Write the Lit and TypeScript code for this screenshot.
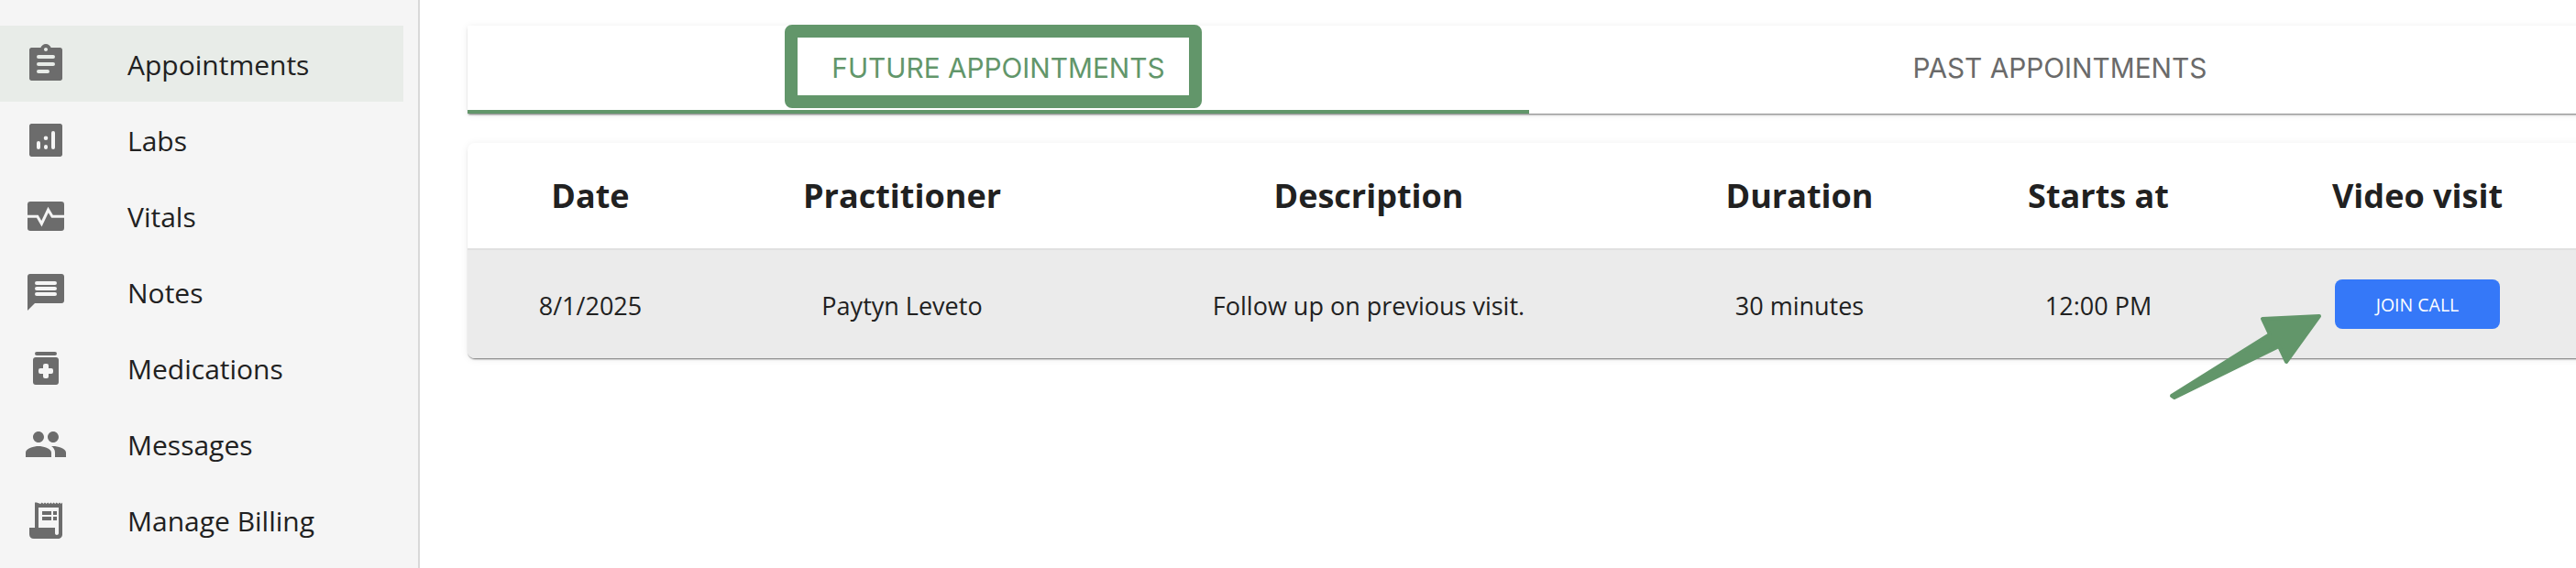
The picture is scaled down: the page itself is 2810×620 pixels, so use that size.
import { LitElement, html, css, svg } from "lit";
import { customElement } from "lit/decorators.js";

const bar = (x: number, y: number, w: number) => `M${x + 1} ${y}h${w - 2}a1 1 0 0 1 0 2H${x + 1}a1 1 0 0 1 0-2z`;

const nav = [
  { label: "Appointments", active: true, icon: svg`<path fill-rule="evenodd" d="M19 3h-4.18C14.4 1.84 13.3 1 12 1s-2.4.84-2.82 2H4.2C3.5 3 3 3.5 3 4.2v15.6c0 .7.5 1.2 1.2 1.2h15.6c.7 0 1.2-.5 1.2-1.2V4.2C21 3.5 20.5 3 19.8 3H19zM12 3c.55 0 1 .45 1 1s-.45 1-1 1-1-.45-1-1 .45-1 1-1z ${bar(7, 7, 10)} ${bar(7, 11, 10)} ${bar(7, 15, 7)}"/>` },
  { label: "Labs", icon: svg`<path fill-rule="evenodd" d="M4.2 3h15.6c.7 0 1.2.5 1.2 1.2v15.6c0 .7-.5 1.2-1.2 1.2H4.2C3.5 21 3 20.5 3 19.8V4.2C3 3.5 3.5 3 4.2 3z M8 12.5a1 1 0 0 1 1 1V16a1 1 0 0 1-2 0v-2.5a1 1 0 0 1 1-1z M12 9.7a1.15 1.15 0 1 1 0 2.3 1.15 1.15 0 0 1 0-2.3z M12 14.5a1 1 0 0 1 1 1v.5a1 1 0 0 1-2 0v-.5a1 1 0 0 1 1-1z M16 7a1 1 0 0 1 1 1v8a1 1 0 0 1-2 0V8a1 1 0 0 1 1-1z"/>` },
  { label: "Vitals", icon: svg`<rect x="2" y="4" width="20" height="16" rx="1.6"/><path d="M2 12.1h5.4l2.3 4 3.6-7.6 2.2 3.6H22" fill="none" stroke="#f5f5f5" stroke-width="1.5"/>` },
  { label: "Notes", icon: svg`<path fill-rule="evenodd" d="M20.6 2H3.4C2.6 2 2 2.6 2 3.4V22l4-4h14.6c.8 0 1.4-.6 1.4-1.4V3.4c0-.8-.6-1.4-1.4-1.4z ${bar(6, 6, 12)} ${bar(6, 9, 12)} ${bar(6, 12, 12)}"/>` },
  { label: "Medications", icon: svg`<path fill-rule="evenodd" d="M7 3h10a1 1 0 0 1 0 2H7a1 1 0 0 1 0-2zM17.6 6H6.4C5.6 6 5 6.6 5 7.4v12.2c0 .8.6 1.4 1.4 1.4h11.2c.8 0 1.4-.6 1.4-1.4V7.4C19 6.6 18.4 6 17.6 6zM15 15h-1.5v1.5a1 1 0 0 1-1 1h-1a1 1 0 0 1-1-1V15H9a1 1 0 0 1-1-1v-1a1 1 0 0 1 1-1h1.5v-1.5a1 1 0 0 1 1-1h1a1 1 0 0 1 1 1V12H15a1 1 0 0 1 1 1v1a1 1 0 0 1-1 1z"/>` },
  { label: "Messages", icon: svg`<path d="M16 11c1.66 0 2.99-1.34 2.99-3S17.66 5 16 5c-1.66 0-3 1.34-3 3s1.34 3 3 3zm-8 0c1.66 0 2.99-1.34 2.99-3S9.66 5 8 5C6.34 5 5 6.34 5 8s1.34 3 3 3zm0 2c-2.33 0-7 1.17-7 3.5V19h14v-2.5c0-2.33-4.67-3.5-7-3.5zm8 0c-.29 0-.62.02-.97.05 1.16.84 1.97 1.97 1.97 3.45V19h6v-2.5c0-2.33-4.67-3.5-7-3.5z"/>` },
  { label: "Manage Billing", icon: svg`<path fill-rule="evenodd" d="M21 2.2 20.3 3l-.8-.8-.8.8-.8-.8-.8.8-.8-.8-.8.8-.8-.8-.8.8-.8-.8-.8.8-.8-.8-.8.8-.8-.8-.8.8L7 2.2h-1V16H3v3.6C3 21 4 22 5.4 22h13.2c1.4 0 2.4-1 2.4-2.4V2.2zM19 19c0 .55-.45 1-1 1s-1-.45-1-1v-3H8V5h11v14zM10 7h5v2h-5zm6 0h2v2h-2zm-6 3h5v2h-5zm6 0h2v2h-2z"/>` },
];

const columns = [
  { head: "Date", cell: "8/1/2025" },
  { head: "Practitioner", cell: "Paytyn Leveto" },
  { head: "Description", cell: "Follow up on previous visit." },
  { head: "Duration", cell: "30 minutes" },
  { head: "Starts at", cell: "12:00 PM" },
];

@customElement("app-root")
export class AppRoot extends LitElement {
  static styles = css`
    :host {
      display: block;
      position: relative;
      width: 2810px;
      height: 620px;
      overflow: hidden;
      background: #fff;
      font-family: "Open Sans", "Liberation Sans", sans-serif;
      color: #212121;
    }
    .page {
      display: grid;
      grid-template-columns: 458px 1fr;
      height: 620px;
    }
    .side {
      background: #f5f5f5;
      border-right: 2px solid #d9d9d9;
      padding: 28px 16px 0 0;
      box-sizing: border-box;
    }
    .item {
      height: 83px;
      display: flex;
      align-items: center;
      gap: 65px;
      padding-left: 26px;
      font-size: 30px;
    }
    .item span { padding-top: 1px; }
    .item.active { background: #e8ece8; }
    .item svg { width: 48px; height: 48px; fill: #6c6c6c; flex: none; }
    .main {
      position: relative;
      padding: 28px 0 0 52px;
      min-width: 0;
    }
    .tabs {
      display: flex;
      width: 2316px;
      height: 96px;
      box-sizing: border-box;
      background: #fff;
      box-shadow: 0 2px 2px -1px rgba(0,0,0,.55), 0 1px 8px rgba(0,0,0,.08);
    }
    .tab {
      flex: 1;
      display: flex;
      align-items: center;
      justify-content: center;
      height: 92px;
      border-bottom: 4px solid transparent;
      font-family: "Inter", sans-serif;
      font-weight: 400;
      font-size: 29.8px;
      color: #6a6a6a;
    }
    .tab.on { color: #62966a; border-bottom-color: #62966a; }
    .card {
      width: 2316px;
      margin-top: 32px;
      background: #fff;
      border-radius: 8px;
      overflow: hidden;
      box-shadow: 0 2px 2px -1px rgba(0,0,0,.55), 0 1px 8px rgba(0,0,0,.08);
    }
    .grid {
      display: grid;
      grid-template-columns: 268px 412px 606px 334px 318px 378px;
      justify-items: center;
      align-items: center;
    }
    .head {
      height: 115px;
      font-weight: 700;
      font-size: 36px;
      color: #212121;
    }
    .row {
      height: 120px;
      background: #ebebeb;
      border-top: 2px solid #e0e0e0;
      box-sizing: border-box;
      font-size: 27px;
    }
    .row > div { padding-top: 2px; }
    .btn {
      width: 180px;
      height: 54px;
      border: 0;
      border-radius: 8px;
      background: #3578f8;
      color: #fff;
      font-family: inherit;
      font-size: 19.5px;
      padding: 0;
    }
    .mark {
      position: absolute;
      left: 398px;
      top: 27px;
      width: 455px;
      height: 91px;
      box-sizing: border-box;
      border: 14px solid #62966a;
      border-radius: 8px;
      pointer-events: none;
    }
    .arrow {
      position: absolute;
      left: 1900px;
      top: 335px;
      width: 180px;
      height: 110px;
      overflow: visible;
      fill: #62966a;
      stroke: #62966a;
      stroke-width: 4px;
      stroke-linejoin: round;
    }
  `;

  render() {
    return html`
      <div class="page">
        <nav class="side">
          ${nav.map(
            (n) => html`<div class="item ${n.active ? "active" : ""}">
              <svg viewBox="0 0 24 24">${n.icon}</svg><span>${n.label}</span>
            </div>`
          )}
        </nav>
        <main class="main">
          <div class="tabs">
            <div class="tab on">FUTURE APPOINTMENTS</div>
            <div class="tab">PAST APPOINTMENTS</div>
          </div>
          <div class="card">
            <div class="grid head">
              ${columns.map((c) => html`<div>${c.head}</div>`)}
              <div>Video visit</div>
            </div>
            <div class="grid row">
              ${columns.map((c) => html`<div>${c.cell}</div>`)}
              <button class="btn">JOIN CALL</button>
            </div>
          </div>
          <div class="mark"></div>
          <svg class="arrow" viewBox="0 0 180 110">
            <path d="M11 97 118 30 110 13 172 10 136 60 128 43 14 99z" />
          </svg>
        </main>
      </div>
    `;
  }
}
